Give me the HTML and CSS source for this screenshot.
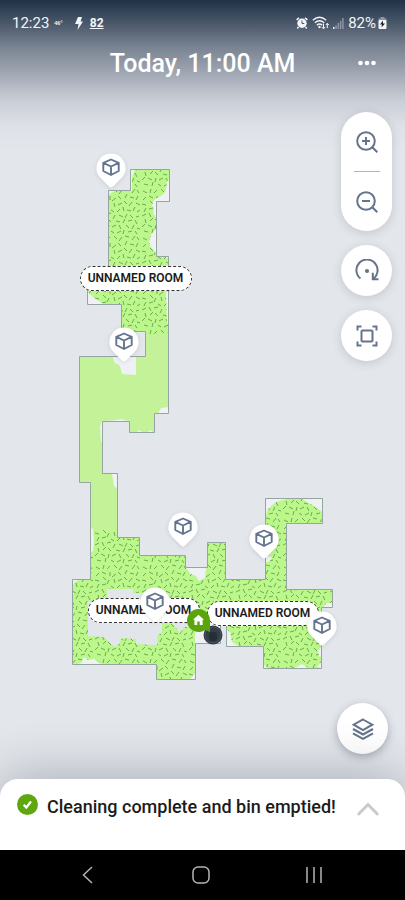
FILE: index.html
```
<!DOCTYPE html>
<html lang="en">
<head>
  <meta charset="UTF-8" />
  <meta name="viewport" content="width=device-width, initial-scale=1.0"/>
  <title>Cleaning Map</title>
  <link rel="stylesheet" href="styles.css">
</head>
<body>
  <!-- shared shapes -->
  <svg class="defs" aria-hidden="true">
    <symbol id="pin" viewBox="0 0 30 36">
      <path fill="#fff" d="M15 .5a14.5 14.5 0 0 1 10.500 24.500L17 33.500q-2 2-4 0L4.500 25A14.500 14.500 0 0 1 15 .5z"/>
      <path fill="none" stroke="#64748f" stroke-width="1.900" stroke-linejoin="round" d="M15 6.500l7.700 3.300v8.200L15 22l-7.700-4V9.800zM7.300 9.800L15 13.500l7.700-3.700M15 13.500V22"/>
    </symbol>
  </svg>

  <div class="app">
    <header>
      <div class="status">
        <div class="status-side">
          <span class="time">12:23</span>
          <span class="temp">46°</span>
          <svg class="bolt" width="8" height="13" viewBox="0 0 8 13"><path fill="#f2f5f8" d="M3 0h4L5.500 4.500H8L2.500 13l1-6H0z"/></svg>
          <span class="score">82</span>
        </div>
        <div class="status-side">
          <svg width="12" height="12" viewBox="0 0 12 12">
            <circle cx="6" cy="6.300" r="4.700" fill="#f2f5f8"/>
            <path stroke="#f2f5f8" stroke-width="1.500" d="M.6 2.800L3 .8M9 .8l2.400 2M2.500 10L1.300 11.500M9.500 10l1.200 1.500"/>
            <path fill="none" stroke="#4a586a" d="M6 3.500v3h2.300"/>
          </svg>
          <svg class="wifi" width="18" height="14" viewBox="0 0 18 14">
            <g fill="none" stroke="#f2f5f8" stroke-width="1.300">
              <path d="M.8 4.200q6.700-6 13.400 0M2.800 6.800q4.700-4.200 9.400 0M4.800 9.200q2.700-2.400 5.400 0"/>
              <path d="M11.500 7.500v5M9.800 11l1.700 1.800 1.700-1.800M15.300 12V7.500M13.800 9l1.500-1.700L16.800 9" stroke-width="1"/>
            </g>
            <circle cx="7.500" cy="11" r="1.200" fill="#f2f5f8"/>
          </svg>
          <svg class="signal" width="11" height="11" viewBox="0 0 11 11">
            <path fill="#e8ebef" d="M0 9h1.500v2H0z"/>
            <path fill="#8b95a2" d="M2.300 7.500h1.500V11H2.300zM4.600 5h1.500v6H4.600zM6.900 2.700h1.500V11H6.900zM9.200 0h1.500v11H9.200z"/>
          </svg>
          <span class="battery-text">82%</span>
          <svg width="9" height="12" viewBox="0 0 9 12">
            <path fill="#8b95a2" d="M2.500 0h4v1.500H2.500zM.5 1.500h8v2h-8z"/>
            <rect x=".5" y="3" width="8" height="9" rx="1" fill="#f2f5f8"/>
            <path fill="#17222f" d="M5 3.500L2 7.500h2L3.500 10.500 7 6.500H5z"/>
          </svg>
        </div>
      </div>
      <div class="title-bar">
        <h1>Today, 11:00 AM</h1>
        <button class="more" aria-label="More options">
          <svg width="18" height="6" viewBox="0 0 18 6" fill="#fff"><circle cx="2.500" cy="3" r="2.300"/><circle cx="9" cy="3" r="2.300"/><circle cx="15.500" cy="3" r="2.300"/></svg>
        </button>
      </div>
    </header>

    <main>
      <div class="map">
        <svg class="floor" width="262" height="540" viewBox="72 150 262 540">
          <defs>
            <path id="outline" d="M130.500 169.500H169.500V201.500H156.500V256.500H168.500V413.500H154.500V432.500H129.500V421.500H102.500V473.500H117.500V537.500H139.500V555.500H185.500V567.500H207.500V542.500H225.500V579.500H265.500V498.500H322.500V523.500H286.500V589.500H332.500V607.500H321.500V668.500H263.500V646.500H226.500V625.500H220.500V643.500H195.500V679.500H156.500V664.500H72.500V579.500H90.500V482.500H79.500V356.500H145.500V331.500H121.500V304.500H87.500V270.500H108.500V190.500H130.500Z"/>
            <clipPath id="inside"><use href="#outline"/></clipPath>
            <pattern id="carpet" width="47" height="47" patternUnits="userSpaceOnUse">
              <rect width="47" height="47" fill="#bcf78c"/>
              <path stroke="#6cab4e" d="M2 3l4 2M10 1l-1 4M13 5l3-3M20 1l3 3M28 2l-3 4M31 1l4 1M38 5l3-4M43 2l2 3
                M5 9l-3 3M8 8l4 2M16 8v4M18 13l4-3M24 8l3 3M33 6l-2 4M36 9l4 1M44 8l-2 4
                M1 16l4 1M9 13l3 3M13 20l2-4M20 15l1 4M24 17l4-2M30 13l3 3M35 18l3-4M42 15l4 2
                M5 20l-2 4M8 21l4-1M17 22l3 2M23 24l3-3M29 19l1 4M33 22l4 1M41 19l-2 4M43 24l3-2
                M1 28l4-2M8 25l2 4M13 26l4-1M19 31l2-4M25 27l4 2M33 26l-2 4M36 27l3 3M42 29l3-1
                M4 31l1 4M9 33l3-3M14 31l3 3M22 33l4 1M29 35l2-4M34 33l4-1M41 32l2 4
                M1 39l3-3M7 37l4 2M15 37l-1 4M18 39l4-2M25 37l2 4M32 37l3 3M38 41l2-4M43 40l3 1
                M3 43l4 1M11 45l1-4M17 43l3 2M23 45l4-2M30 42l-1 4M34 44l4-1M41 43l2 3"/>
            </pattern>
          </defs>
          <g clip-path="url(#inside)">
            <rect x="72" y="150" width="262" height="540" fill="#c4f298"/>
            <path fill="url(#carpet)" d="M80 160h95v174l-7-2-5 3-6-2-6 2-5-3H80z"/>
            <path fill="url(#carpet)" d="M72 530h23l4 3 5-4 5 3 6-2h70v-40h150v200H72z"/>
            <!-- spots the robot did not reach -->
            <g fill="#eff1f5">
              <path d="M170 180l-3 1-1 9-2 4-5 3-5 3-2 5 2 4-1 4 4 6v9l-3 3-3 4-2 7 2 5 3 4 4 4h5l4 3h5z"/>
              <path d="M130 169h5l-3 8v14h-3zM108 190h8l-8 5zM87 291l7 7 11 7H87zM166 291l3 1v33l-2-2z"/>
              <path d="M113 356h23v19l-14-1-2-8-6-4zM169 407l-8 1-3 6h11zM102 420l-2 7 1 15 2-1zM106 421h22l-8-2-4 1zM136 433l3-3 5 3zM147 433l3-3 5 3z"/>
              <path d="M112 474h6v15l-4-3zM90 528l3 1 1 12-1 10-3 2zM72 579h9l-6 3-3 4z"/>
              <path d="M185 567l6 7 5 2 3 5 6-3 1-11zM72 665l9-2 3-6 4 3 6-1 9 6zM190 679l5-6v7z"/>
              <path d="M265 498h25l-14 4-8 7-3 8zM301 498h22v15l-7-6-9-5zM265 549l3 6 4 3-3 4h-4z"/>
              <path d="M195 619h25v25h-25zM226 629l4 3 2 10 6 4h-12zM263 664l6 5h-6zM294 668l8-4 8 5zM322 646l-4 5 1 5 3 1zM322 661l-5 6 5 2zM327 603h6v5h-11z"/>
            </g>
            <!-- furniture in the lower room -->
            <path fill="#e2e5ea" d="M107 589h26v4h36v7h15v24h15l-6 3h-9l-4 6-7-9-11-2v10l-4 3-1 10-21-1v-5l-14-1-3 6-4 3-7-6-4-4-16-1v-34l19-4z"/>
          </g>
          <use href="#outline" fill="none" stroke="#95a59f"/>
        </svg>

        <span class="room room-top">UNNAMED ROOM</span>
        <span class="room room-left">UNNAMED ROOM</span>
        <span class="room room-right">UNNAMED ROOM</span>

        <svg class="robot" width="20" height="20" viewBox="0 0 20 20">
          <circle cx="10" cy="10" r="9.500" fill="#343d48"/>
          <circle cx="10" cy="10" r="8" fill="none" stroke="#45505c"/>
          <rect x="6" y="7" width="8" height="9" rx="3" fill="#252d37"/>
        </svg>
        <svg class="dock" width="24" height="24" viewBox="0 0 24 24">
          <path fill="#5ba50c" d="M11.500 0A11.500 11.500 0 0 1 23 11.500V23L18 21A11.500 11.500 0 1 1 11.500 0z"/>
          <path fill="#fff" d="M11.500 5.800l5.500 5h-1.400V16h-2.900v-3.500h-2.400V16H7.400v-5.200H6z"/>
        </svg>

        <svg class="pin pin-1"><use href="#pin"/></svg>
        <svg class="pin pin-2"><use href="#pin"/></svg>
        <svg class="pin pin-3"><use href="#pin"/></svg>
        <svg class="pin pin-4"><use href="#pin"/></svg>
        <svg class="pin pin-5"><use href="#pin"/></svg>
        <svg class="pin pin-6"><use href="#pin"/></svg>
      </div>

      <div class="controls">
        <div class="zoom">
          <button aria-label="Zoom in">
            <svg width="24" height="24" viewBox="0 0 24 24"><circle cx="11" cy="11" r="8.800"/><path d="M17.300 17.300l5 5M11 7v8M7 11h8"/></svg>
          </button>
          <hr>
          <button aria-label="Zoom out">
            <svg width="24" height="24" viewBox="0 0 24 24"><circle cx="11" cy="11" r="8.800"/><path d="M17.300 17.300l5 5M7 11h8"/></svg>
          </button>
        </div>
        <button class="round" aria-label="Rotate map">
          <svg width="24" height="24" viewBox="0 0 24 24"><path d="M5.500 19.500A10.600 10.600 0 1 1 18.500 19.500M17.800 13.800v6.400h5.700"/><circle class="dot" cx="12" cy="12" r="2.100"/></svg>
        </button>
        <button class="round" aria-label="Fit to screen">
          <svg width="24" height="24" viewBox="0 0 24 24"><path d="M2.500 6.500v-4h4M17.500 2.500h4v4M21.500 17.500v4h-4M6.500 21.500h-4v-4"/><rect x="6.500" y="6.500" width="11" height="11" rx="1"/></svg>
        </button>
      </div>

      <button class="round layers" aria-label="Map layers">
        <svg width="24" height="24" viewBox="0 0 24 24"><path d="M12 2.500l9.300 5.200L12 13 2.700 7.700zM2 12l10 5.500L22 12M2 16.300l10 5.500 10-5.500"/></svg>
      </button>
    </main>

    <section class="sheet">
      <svg width="21" height="21" viewBox="0 0 21 21"><circle cx="10.500" cy="10.500" r="10.500" fill="#5ea70e"/><path fill="none" stroke="#fff" stroke-width="2.200" d="M6.700 10.700l2.600 2.800L14 7.500"/></svg>
      <p>Cleaning complete and bin emptied!</p>
      <button aria-label="Expand details">
        <svg width="22" height="14" viewBox="0 0 22 14"><path fill="none" stroke="#c9c9c9" stroke-width="2.800" stroke-linecap="round" d="M1.700 12L11 2.500l9.300 9.500"/></svg>
      </button>
    </section>

    <nav>
      <button aria-label="Back"><svg width="18" height="18" viewBox="0 0 18 18"><path d="M13 1L4.500 9l8.500 8"/></svg></button>
      <button aria-label="Home"><svg width="18" height="18" viewBox="0 0 18 18"><rect x="1" y="1" width="16" height="16" rx="5"/></svg></button>
      <button aria-label="Recent apps"><svg width="18" height="18" viewBox="0 0 18 18"><path d="M2 1v16M9 1v16M16 1v16"/></svg></button>
    </nav>
  </div>
</body>
</html>
```
FILE: styles.css
```
* {
  box-sizing: border-box;
}
body {
  margin: 0;
  font-family: Roboto, "Liberation Sans", sans-serif;
  color: #1b1b1b;
}
svg {
  display: block;
}
button {
  display: flex;
  align-items: center;
  justify-content: center;
  padding: 0;
  border: 0;
  background: none;
}
.defs {
  position: absolute;
  width: 0;
  height: 0;
}
.app {
  display: flex;
  flex-direction: column;
  min-height: 100vh;
  background: linear-gradient(#203147 0, #4b596b 24px, #7b8492 48px, #a5abb7 76px, #c9cdd5 100px, #dde0e6 125px, #e3e6eb 150px);
}

/* header */
.status {
  display: flex;
  justify-content: space-between;
  align-items: center;
  height: 46px;
  padding: 0 18px 0 12px;
  color: #f2f5f8;
  font-size: 15px;
}
.status-side {
  display: flex;
  align-items: center;
}
.temp {
  margin-left: 5px;
  font: bold 6px "Liberation Serif", serif;
}
.bolt {
  margin-left: 12px;
}
.score {
  margin-left: 7px;
  font-size: 12px;
  font-weight: 700;
  text-decoration: underline;
}
.wifi {
  margin-left: 4px;
}
.signal {
  margin: 0 4px 0 3px;
}
.battery-text {
  margin-right: 2px;
}
.title-bar {
  display: grid;
  grid-template-columns: 1fr auto 1fr;
  align-items: center;
  height: 34px;
  padding: 0 29px;
}
h1 {
  grid-column: 2;
  margin: 0;
  color: #fff;
  font-size: 25px;
  font-weight: 500;
}
.more {
  justify-self: end;
}

/* map */
main {
  position: relative;
  flex: 1;
  padding-top: 70px;
}
.map {
  position: relative;
  width: 262px;
  margin: 0 auto;
}
.room {
  position: absolute;
  width: 112px;
  height: 25px;
  border: 1px dashed #333;
  border-radius: 13px;
  background: #fff;
  font-size: 12px;
  font-weight: 600;
  line-height: 23px;
  text-align: center;
  white-space: nowrap;
}
.room-top { left: 8px; top: 116px; }
.room-left { left: 16px; top: 448px; }
.room-right { left: 135px; top: 451px; }
.robot {
  position: absolute;
  left: 131px;
  top: 475px;
}
.dock {
  position: absolute;
  left: 115px;
  top: 459px;
}
.pin {
  position: absolute;
  width: 30px;
  height: 36px;
  filter: drop-shadow(0 1px 2px rgba(60, 70, 90, 0.15));
}
.pin-1 { left: 24px; top: 3px; }
.pin-2 { left: 37px; top: 177px; }
.pin-3 { left: 96px; top: 362px; }
.pin-4 { left: 177px; top: 374px; }
.pin-5 { left: 68px; top: 437px; }
.pin-6 { left: 235px; top: 461px; }

/* floating buttons */
.controls {
  position: absolute;
  top: 32px;
  right: 13px;
  display: flex;
  flex-direction: column;
  gap: 14px;
}
.controls svg,
.layers svg {
  fill: none;
  stroke: #65748b;
  stroke-width: 2;
}
.controls .dot {
  fill: #65748b;
  stroke: none;
}
.zoom,
.round {
  width: 51px;
  border-radius: 26px;
  background: #fff;
  box-shadow: 0 2px 10px rgba(50, 60, 80, 0.18);
}
.zoom button {
  width: 100%;
  height: 59px;
}
.zoom hr {
  width: 26px;
  height: 1px;
  margin: 0 auto;
  border: 0;
  background: #aab4c4;
}
.round {
  height: 51px;
}
.layers {
  position: absolute;
  right: 17px;
  bottom: 25px;
  box-shadow: 0 3px 8px rgba(50, 60, 80, 0.35);
}

/* bottom */
.sheet {
  position: relative;
  display: flex;
  align-items: flex-start;
  height: 71px;
  padding: 15px 26px 0 17px;
  border-radius: 18px 18px 0 0;
  background: #fff;
  box-shadow: 0 -4px 50px rgba(40, 50, 65, 0.3);
}
.sheet p {
  flex: 1;
  margin: 0 0 0 9px;
  font-size: 18px;
  font-weight: 500;
  line-height: 25px;
}
.sheet button {
  margin-top: 8px;
}
nav {
  position: relative;
  display: grid;
  grid-template-columns: repeat(3, 1fr);
  height: 50px;
  padding: 0 35px 0 31px;
  background: #000;
}
nav svg {
  fill: none;
  stroke: #b5b5b5;
  stroke-width: 1.5;
}
```
